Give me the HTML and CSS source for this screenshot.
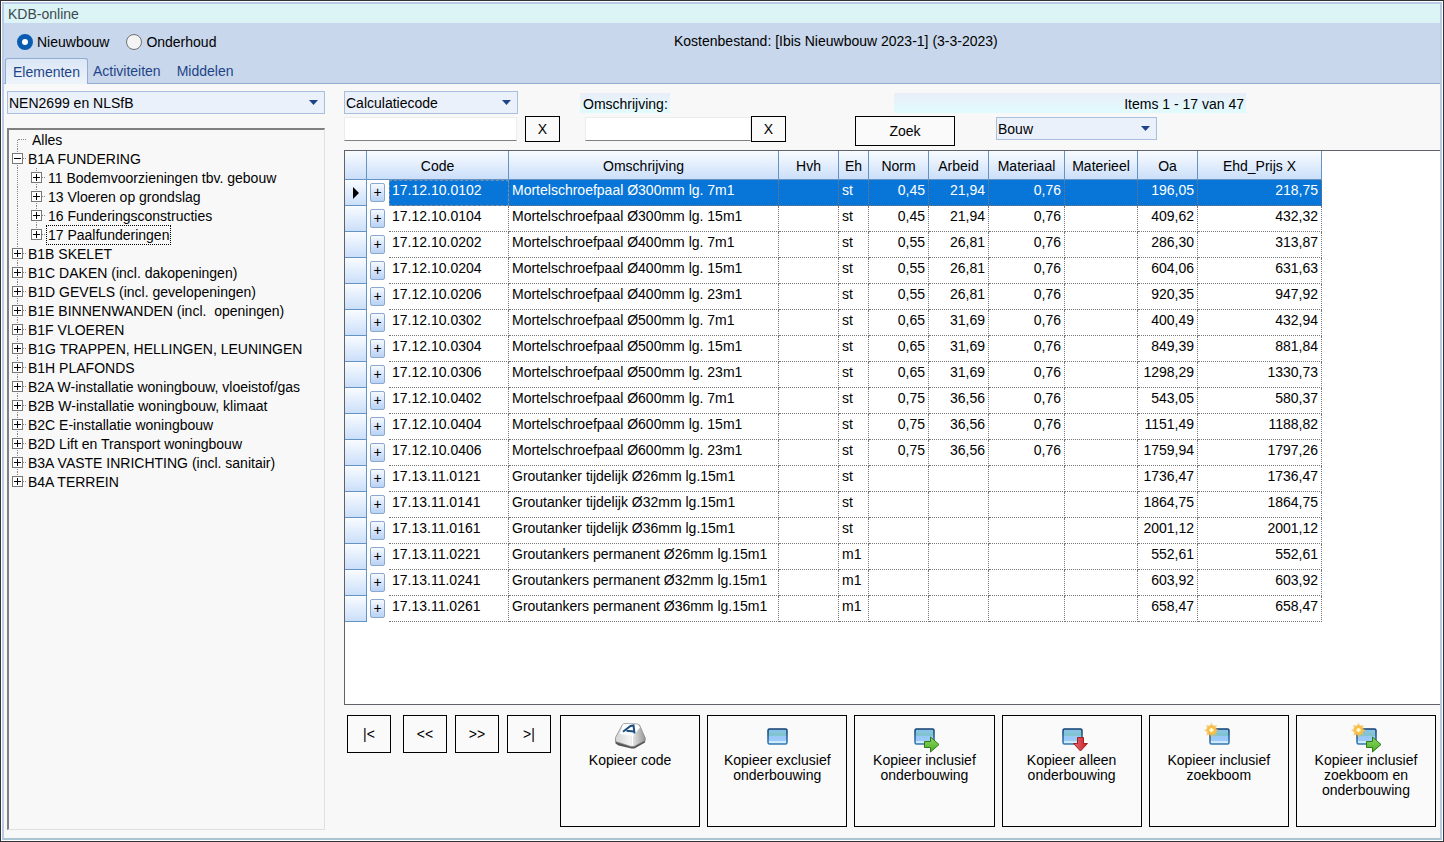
FILE: index.html
```html
<!DOCTYPE html>
<html lang="nl">
<head>
<meta charset="utf-8">
<title>KDB-online</title>
<link rel="stylesheet" href="styles.css">
</head>
<body>
<svg class="defs" aria-hidden="true">
  <defs>
    <linearGradient id="screen" x1="0" y1="0" x2="0" y2="1">
      <stop offset="0" stop-color="#8cc0ee"/><stop offset=".25" stop-color="#84c4d8"/><stop offset=".42" stop-color="#7cc4c8"/><stop offset=".5" stop-color="#98c8f8"/><stop offset=".78" stop-color="#9ccbfa"/><stop offset=".85" stop-color="#d8f0fc"/><stop offset="1" stop-color="#c4e4fa"/>
    </linearGradient>
    <linearGradient id="frame" x1="0" y1="0" x2="0" y2="1">
      <stop offset="0" stop-color="#123f72"/><stop offset="1" stop-color="#3478b0"/>
    </linearGradient>
    <linearGradient id="green" x1="0" y1="0" x2="0" y2="1">
      <stop offset="0" stop-color="#8ad860"/><stop offset="1" stop-color="#4fae28"/>
    </linearGradient>
    <linearGradient id="red" x1="0" y1="0" x2="1" y2="0">
      <stop offset="0" stop-color="#e86868"/><stop offset="1" stop-color="#c82028"/>
    </linearGradient>
    <linearGradient id="key" x1="0" y1="0" x2="1" y2="0">
      <stop offset="0" stop-color="#d4d4d4"/><stop offset=".5" stop-color="#f4f4f4"/><stop offset="1" stop-color="#989898"/>
    </linearGradient>
    <radialGradient id="sun">
      <stop offset="0" stop-color="#fff6c0"/><stop offset=".3" stop-color="#ffd860"/><stop offset=".7" stop-color="#f6b840"/><stop offset="1" stop-color="#f8c860" stop-opacity=".6"/>
    </radialGradient>
    <g id="i-screen"><rect x="7" y="6" width="19" height="15" rx="1.500" fill="url(#screen)" stroke="url(#frame)" stroke-width="1.500"/></g>
    <path id="i-right" d="M16.500 18.500h6v-4.500l8.500 7.500-8.500 7.500v-4.500h-6z" fill="url(#green)" stroke="#2f7a18"/>
    <path id="i-down" d="M21.500 14.500h6v6h4l-7 7.500-7-7.500h4z" fill="url(#red)" stroke="#a02028"/>
    <g id="i-sun"><path d="M8.500-.5l1.700 3.200 3.600-.8-.8 3.600 3 1.700-3 1.700.8 3.600-3.600-.8-1.700 3.200-1.700-3.200-3.600.8.800-3.600-3-1.700 3-1.700-.800-3.600 3.600.800z" fill="#f4b850" opacity=".65"/><circle cx="8.500" cy="7" r="5" fill="url(#sun)"/><path d="M6.500 7h4M8.500 5v4" stroke="#fffbe4" stroke-width="1.500"/></g>
  </defs>
</svg>
<div class="window">
  <div class="title">KDB-online</div>
  <header class="header">
    <div class="mode">
      <label><input type="radio" name="mode" checked>Nieuwbouw</label>
      <label><input type="radio" name="mode">Onderhoud</label>
    </div>
    <div class="source">Kostenbestand: [Ibis Nieuwbouw 2023-1] (3-3-2023)</div>
  </header>
  <nav class="tabs">
    <button class="tab active">Elementen</button>
    <button class="tab">Activiteiten</button>
    <button class="tab">Middelen</button>
  </nav>
  <main class="content">
    <aside class="side">
      <span class="select"><select aria-label="Indeling"><option>NEN2699 en NLSfB</option></select></span>
      <div class="tree">
        <ul>
          <li class="first"><i class="rail"></i><i class="tick long"></i><span>Alles</span></li>
          <li><i class="rail"><button class="box open" aria-label="Inklappen"></button></i><i class="tick"></i><span>B1A FUNDERING</span></li>
          <li><i class="rail"></i><i class="rail child"><button class="box" aria-label="Uitklappen"></button></i><i class="tick"></i><span>11 Bodemvoorzieningen tbv. gebouw</span></li>
          <li><i class="rail"></i><i class="rail child"><button class="box" aria-label="Uitklappen"></button></i><i class="tick"></i><span>13 Vloeren op grondslag</span></li>
          <li><i class="rail"></i><i class="rail child"><button class="box" aria-label="Uitklappen"></button></i><i class="tick"></i><span>16 Funderingsconstructies</span></li>
          <li><i class="rail"></i><i class="rail child end"><button class="box" aria-label="Uitklappen"></button></i><i class="tick"></i><span class="focus">17 Paalfunderingen</span></li>
          <li><i class="rail"><button class="box" aria-label="Uitklappen"></button></i><i class="tick"></i><span>B1B SKELET</span></li>
          <li><i class="rail"><button class="box" aria-label="Uitklappen"></button></i><i class="tick"></i><span>B1C DAKEN (incl. dakopeningen)</span></li>
          <li><i class="rail"><button class="box" aria-label="Uitklappen"></button></i><i class="tick"></i><span>B1D GEVELS (incl. gevelopeningen)</span></li>
          <li><i class="rail"><button class="box" aria-label="Uitklappen"></button></i><i class="tick"></i><span>B1E BINNENWANDEN (incl.&nbsp; openingen)</span></li>
          <li><i class="rail"><button class="box" aria-label="Uitklappen"></button></i><i class="tick"></i><span>B1F VLOEREN</span></li>
          <li><i class="rail"><button class="box" aria-label="Uitklappen"></button></i><i class="tick"></i><span>B1G TRAPPEN, HELLINGEN, LEUNINGEN</span></li>
          <li><i class="rail"><button class="box" aria-label="Uitklappen"></button></i><i class="tick"></i><span>B1H PLAFONDS</span></li>
          <li><i class="rail"><button class="box" aria-label="Uitklappen"></button></i><i class="tick"></i><span>B2A W-installatie woningbouw, vloeistof/gas</span></li>
          <li><i class="rail"><button class="box" aria-label="Uitklappen"></button></i><i class="tick"></i><span>B2B W-installatie woningbouw, klimaat</span></li>
          <li><i class="rail"><button class="box" aria-label="Uitklappen"></button></i><i class="tick"></i><span>B2C E-installatie woningbouw</span></li>
          <li><i class="rail"><button class="box" aria-label="Uitklappen"></button></i><i class="tick"></i><span>B2D Lift en Transport woningbouw</span></li>
          <li><i class="rail"><button class="box" aria-label="Uitklappen"></button></i><i class="tick"></i><span>B3A VASTE INRICHTING (incl. sanitair)</span></li>
          <li><i class="rail end"><button class="box" aria-label="Uitklappen"></button></i><i class="tick"></i><span>B4A TERREIN</span></li>
        </ul>
      </div>
    </aside>
    <section class="work">
      <form class="filters" onsubmit="return false">
        <div class="filter code">
          <span class="select"><select aria-label="Zoekveld"><option>Calculatiecode</option></select></span>
          <div class="entry"><input type="text" aria-label="Calculatiecode"><button type="button" class="btn clear">X</button></div>
        </div>
        <div class="filter desc">
          <label class="tint" for="desc">Omschrijving:</label>
          <div class="entry"><input type="text" id="desc"><button type="button" class="btn clear">X</button></div>
        </div>
        <div class="filter find">
          <div class="tint count">Items 1 - 17 van 47</div>
          <div class="entry"><button class="btn search">Zoek</button><span class="select"><select aria-label="Sector"><option>Bouw</option></select></span></div>
        </div>
      </form>
      <div class="grid">
        <table>
          <colgroup><col class="w22"><col class="w22"><col class="w120"><col class="w270"><col class="w60"><col class="w30"><col class="w60"><col class="w60"><col class="w76"><col class="w73"><col class="w60"><col class="w124"></colgroup>
          <thead>
            <tr><th></th><th colspan="2">Code</th><th>Omschrijving</th><th>Hvh</th><th>Eh</th><th>Norm</th><th>Arbeid</th><th>Materiaal</th><th>Materieel</th><th>Oa</th><th>Ehd_Prijs X</th></tr>
          </thead>
          <tbody>
            <tr class="selected"><th><svg class="current" viewBox="0 0 6 12"><path d="M0 0l6 6-6 6z"/></svg></th><td><button class="plus">+</button></td><td>17.12.10.0102</td><td>Mortelschroefpaal Ø300mm lg. 7m1</td><td></td><td>st</td><td>0,45</td><td>21,94</td><td>0,76</td><td></td><td>196,05</td><td>218,75</td></tr>
            <tr><th></th><td><button class="plus">+</button></td><td>17.12.10.0104</td><td>Mortelschroefpaal Ø300mm lg. 15m1</td><td></td><td>st</td><td>0,45</td><td>21,94</td><td>0,76</td><td></td><td>409,62</td><td>432,32</td></tr>
            <tr><th></th><td><button class="plus">+</button></td><td>17.12.10.0202</td><td>Mortelschroefpaal Ø400mm lg. 7m1</td><td></td><td>st</td><td>0,55</td><td>26,81</td><td>0,76</td><td></td><td>286,30</td><td>313,87</td></tr>
            <tr><th></th><td><button class="plus">+</button></td><td>17.12.10.0204</td><td>Mortelschroefpaal Ø400mm lg. 15m1</td><td></td><td>st</td><td>0,55</td><td>26,81</td><td>0,76</td><td></td><td>604,06</td><td>631,63</td></tr>
            <tr><th></th><td><button class="plus">+</button></td><td>17.12.10.0206</td><td>Mortelschroefpaal Ø400mm lg. 23m1</td><td></td><td>st</td><td>0,55</td><td>26,81</td><td>0,76</td><td></td><td>920,35</td><td>947,92</td></tr>
            <tr><th></th><td><button class="plus">+</button></td><td>17.12.10.0302</td><td>Mortelschroefpaal Ø500mm lg. 7m1</td><td></td><td>st</td><td>0,65</td><td>31,69</td><td>0,76</td><td></td><td>400,49</td><td>432,94</td></tr>
            <tr><th></th><td><button class="plus">+</button></td><td>17.12.10.0304</td><td>Mortelschroefpaal Ø500mm lg. 15m1</td><td></td><td>st</td><td>0,65</td><td>31,69</td><td>0,76</td><td></td><td>849,39</td><td>881,84</td></tr>
            <tr><th></th><td><button class="plus">+</button></td><td>17.12.10.0306</td><td>Mortelschroefpaal Ø500mm lg. 23m1</td><td></td><td>st</td><td>0,65</td><td>31,69</td><td>0,76</td><td></td><td>1298,29</td><td>1330,73</td></tr>
            <tr><th></th><td><button class="plus">+</button></td><td>17.12.10.0402</td><td>Mortelschroefpaal Ø600mm lg. 7m1</td><td></td><td>st</td><td>0,75</td><td>36,56</td><td>0,76</td><td></td><td>543,05</td><td>580,37</td></tr>
            <tr><th></th><td><button class="plus">+</button></td><td>17.12.10.0404</td><td>Mortelschroefpaal Ø600mm lg. 15m1</td><td></td><td>st</td><td>0,75</td><td>36,56</td><td>0,76</td><td></td><td>1151,49</td><td>1188,82</td></tr>
            <tr><th></th><td><button class="plus">+</button></td><td>17.12.10.0406</td><td>Mortelschroefpaal Ø600mm lg. 23m1</td><td></td><td>st</td><td>0,75</td><td>36,56</td><td>0,76</td><td></td><td>1759,94</td><td>1797,26</td></tr>
            <tr><th></th><td><button class="plus">+</button></td><td>17.13.11.0121</td><td>Groutanker tijdelijk Ø26mm lg.15m1</td><td></td><td>st</td><td></td><td></td><td></td><td></td><td>1736,47</td><td>1736,47</td></tr>
            <tr><th></th><td><button class="plus">+</button></td><td>17.13.11.0141</td><td>Groutanker tijdelijk Ø32mm lg.15m1</td><td></td><td>st</td><td></td><td></td><td></td><td></td><td>1864,75</td><td>1864,75</td></tr>
            <tr><th></th><td><button class="plus">+</button></td><td>17.13.11.0161</td><td>Groutanker tijdelijk Ø36mm lg.15m1</td><td></td><td>st</td><td></td><td></td><td></td><td></td><td>2001,12</td><td>2001,12</td></tr>
            <tr><th></th><td><button class="plus">+</button></td><td>17.13.11.0221</td><td>Groutankers permanent Ø26mm lg.15m1</td><td></td><td>m1</td><td></td><td></td><td></td><td></td><td>552,61</td><td>552,61</td></tr>
            <tr><th></th><td><button class="plus">+</button></td><td>17.13.11.0241</td><td>Groutankers permanent Ø32mm lg.15m1</td><td></td><td>m1</td><td></td><td></td><td></td><td></td><td>603,92</td><td>603,92</td></tr>
            <tr><th></th><td><button class="plus">+</button></td><td>17.13.11.0261</td><td>Groutankers permanent Ø36mm lg.15m1</td><td></td><td>m1</td><td></td><td></td><td></td><td></td><td>658,47</td><td>658,47</td></tr>
          </tbody>
        </table>
      </div>
      <footer class="actions">
        <div class="pager">
          <button class="btn">|&lt;</button>
          <button class="btn">&lt;&lt;</button>
          <button class="btn">&gt;&gt;</button>
          <button class="btn">&gt;|</button>
        </div>
        <div class="copies">
          <button class="btn copy"><svg viewBox="0 0 32 30"><path d="M1.500 17v3.500l3 2 13 3h3l10.500-6 .5-4-2-4-12 5z" fill="#555"/><path d="M8.500 1.500l-7 13v4l15.500 5h3l11-6v-3l-5.500-12.500-2-1-13-.5z" fill="url(#key)" stroke="#8a8a8a" stroke-width=".8"/><path d="M9 1.500l-3 9.500 13 2 7-8.500-2-3-13-.5z" fill="#fff"/><path d="M18.500 13l0 9" stroke="#fff"/><path d="M9 8.800L16.500 3l3-.5L20.500 10.500M12.500 7.800l7.500.8" fill="none" stroke="#1a4f80" stroke-width="2"/></svg><span>Kopieer code</span></button>
          <button class="btn copy"><svg viewBox="0 0 32 30"><use href="#i-screen"/></svg><span>Kopieer exclusief onderbouwing</span></button>
          <button class="btn copy"><svg viewBox="0 0 32 30"><use href="#i-screen"/><use href="#i-right"/></svg><span>Kopieer inclusief onderbouwing</span></button>
          <button class="btn copy"><svg viewBox="0 0 32 30"><use href="#i-screen"/><use href="#i-down"/></svg><span>Kopieer alleen onderbouwing</span></button>
          <button class="btn copy"><svg viewBox="0 0 32 30"><use href="#i-screen"/><use href="#i-sun"/></svg><span>Kopieer inclusief zoekboom</span></button>
          <button class="btn copy"><svg viewBox="0 0 32 30"><use href="#i-screen"/><use href="#i-sun"/><use href="#i-right"/></svg><span>Kopieer inclusief zoekboom en onderbouwing</span></button>
        </div>
      </footer>
    </section>
  </main>
</div>
</body>
</html>
```
FILE: styles.css
```css
* { box-sizing: border-box; }

body {
  margin: 0;
  background: #fff;
  color: #000;
  font: 14px/16px "Liberation Sans", Arial, sans-serif;
}

button, input, select { font: inherit; color: inherit; }
button { padding: 0; }
i { font-style: normal; }
.defs { position: absolute; width: 0; height: 0; }

.window {
  display: flex;
  flex-direction: column;
  min-height: calc(100vh - 4px);
  margin: 2px;
  border: 2px solid #b9cbe6;
  border-bottom-color: #abc4d4;
  outline: 1px solid #303236;
  outline-offset: 1px;
  background: #f8f8f8;
}

.title { background: #dcf4f5; color: #3c4a50; padding: 2px 4px; height: 19px; }

.header {
  display: flex;
  align-items: center;
  height: 36px;
  background: #c8d7eb;
}
.mode { display: flex; flex: 0 0 670px; gap: 17px; padding: 2px 0 0 13px; }
.mode label { display: flex; align-items: center; gap: 4px; }
.mode input {
  appearance: none;
  width: 16px;
  height: 16px;
  margin: 0;
  border: 1px solid #707070;
  border-radius: 50%;
  background: #f4f4f4;
}
.mode input:checked { border: 5px solid #0a5cb0; background: #fff; }

.tabs {
  display: flex;
  align-items: flex-end;
  height: 25px;
  padding-left: 1px;
  background: #c8d7eb;
  border-bottom: 1px solid #93add2;
}
.tab {
  height: 26px;
  margin-bottom: -1px;
  padding: 0 8px;
  border: 0;
  background: none;
  color: #1e4487;
}
.tab + .tab { padding: 0 11px 0 5px; }
.tab.active {
  padding: 0 7px;
  border: 1px solid #93add2;
  border-bottom: 0;
  border-radius: 3px 3px 0 0;
  background: linear-gradient(#dbe7f6, #edf3fa);
}

.content { display: flex; flex: 1; gap: 19px; padding: 7px 0 8px 3px; }

.select { display: grid; }
.select > select, .select::after { grid-area: 1 / 1; }
.select > select {
  appearance: none;
  width: 100%;
  height: 23px;
  padding: 0 20px 0 1px;
  border: 1px solid #a9bfdd;
  border-radius: 0;
  background: #eaf1fb;
}
.select::after {
  content: "";
  place-self: center end;
  width: 9px;
  height: 5px;
  margin-right: 7px;
  background: #1e4487;
  clip-path: polygon(0 0, 100% 0, 50% 100%);
  pointer-events: none;
}

.side { display: flex; flex-direction: column; flex: 0 0 318px; gap: 14px; }
.tree {
  flex: 1;
  padding-left: 3px;
  border: 1px solid #e0e0e0;
  border-top: 2px solid #808080;
  border-left: 2px solid #808080;
}
.tree ul { margin: 0; padding: 0; list-style: none; }
.tree li { display: flex; align-items: center; height: 19px; white-space: nowrap; }
.rail {
  display: grid;
  place-items: center;
  align-self: stretch;
  flex: 0 0 11px;
  background: repeating-linear-gradient(#888 0 1px, transparent 1px 2px) 5px 0 / 1px 100% no-repeat;
}
.rail.child { margin-left: 8px; }
.rail.end { background-size: 1px 50%; }
.first .rail { background-position: 5px 100%; background-size: 1px 50%; }
.box {
  width: 11px;
  height: 11px;
  border: 1px solid #777;
  background:
    linear-gradient(#000, #000) center / 7px 1px no-repeat,
    linear-gradient(#000, #000) center / 1px 7px no-repeat,
    #fff;
}
.box.open { background: linear-gradient(#000, #000) center / 7px 1px no-repeat, #fff; }
.tick { width: 3px; margin-right: 2px; border-top: 1px dotted #888; }
.child + .tick { margin-right: 3px; }
.tick.long { width: 8px; margin-left: -5px; margin-right: 6px; }
.focus { outline: 1px dotted #000; outline-offset: 1px; }

.work { display: flex; flex-direction: column; flex: 1; min-width: 0; }

.filters { display: flex; }
.filter { display: flex; flex-direction: column; }
.filter .entry { display: flex; align-items: flex-start; }
.filter input {
  flex: 1;
  min-width: 0;
  height: 24px;
  margin-top: 1px;
  padding: 0 2px;
  border: 1px solid #ececec;
  border-bottom-color: #808080;
  background: #fff;
}
.code { width: 216px; margin-right: 25px; gap: 2px; }
.code .select { width: 174px; }
.code .entry { gap: 8px; }
.desc { width: 201px; margin-right: 69px; padding-top: 2px; gap: 3px; }
.find { width: 391px; padding-top: 2px; gap: 3px; }
.find .entry { gap: 41px; }
.find .select { flex: 1; margin-top: 1px; margin-right: 89px; }
.tint { height: 20px; padding: 3px 2px 1px 3px; background: linear-gradient(#e9eef9, #e0fbfd); }
.desc .tint { align-self: flex-start; margin-left: -5px; }
.count { width: 352px; align-self: flex-end; text-align: right; }

.btn { border: 1px solid #000; background: #fafafa; }
.clear { width: 35px; height: 26px; }
.search { width: 100px; height: 30px; }

.grid {
  flex: 1;
  margin-top: 4px;
  border: 1px solid #60626a;
  border-right: 0;
  background: #fff;
}
table { width: 977px; table-layout: fixed; border-collapse: separate; border-spacing: 0; }
.w22 { width: 22px; }
.w30 { width: 30px; }
.w60 { width: 60px; }
.w73 { width: 73px; }
.w76 { width: 76px; }
.w120 { width: 120px; }
.w124 { width: 124px; }
.w270 { width: 270px; }
th {
  padding: 0;
  font-weight: normal;
  border-right: 1px solid #6593c4;
  border-bottom: 1px solid #6593c4;
  background: linear-gradient(#f9fcff, #cbdffa);
}
thead th { height: 29px; padding-top: 2px; }
td {
  height: 26px;
  padding: 0 3px 5px;
  border-right: 1px dotted #777;
  border-bottom: 1px dotted #777;
  white-space: nowrap;
}
td:nth-child(2) { border: 0; padding: 0; }
td:nth-child(n+7) { text-align: right; }
.selected td:nth-child(n+3) { background: #0876d8; color: #fff; }
.selected td:nth-child(3) { outline: 1px dashed #7890a8; outline-offset: -1px; }
.current { display: block; width: 6px; height: 12px; margin: 0 auto; }
.plus {
  display: block;
  width: 15px;
  height: 19px;
  margin: 0 0 1px 3px;
  border: 1px solid #8ba8cf;
  border-radius: 2px;
  background: linear-gradient(#f6faff, #b9d2f5);
  line-height: 15px;
}

.actions { display: flex; gap: 9px; padding: 10px 4px 3px 3px; }
.pager { display: flex; gap: 8px; }
.pager .btn { width: 44px; height: 38px; }
.pager .btn:first-child { margin-right: 4px; }
.copies { display: flex; flex: 1; gap: 7px; }
.copy {
  display: flex;
  flex-direction: column;
  align-items: center;
  flex: 1 1 0;
  height: 112px;
  padding: 7px 12px 0;
  line-height: 15px;
}
.copy svg { width: 32px; height: 30px; overflow: visible; }
```
